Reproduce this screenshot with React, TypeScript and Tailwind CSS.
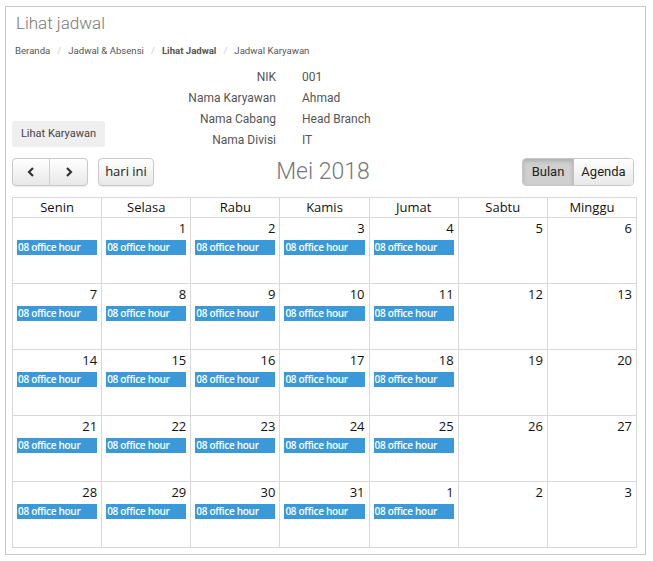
import React from "react";

const days = ["Senin", "Selasa", "Rabu", "Kamis", "Jumat", "Sabtu", "Minggu"];

type Cell = { d: number | null; ev: boolean };

const weeks: Cell[][] = [
  [
    { d: null, ev: true },
    { d: 1, ev: true },
    { d: 2, ev: true },
    { d: 3, ev: true },
    { d: 4, ev: true },
    { d: 5, ev: false },
    { d: 6, ev: false },
  ],
  [7, 8, 9, 10, 11, 12, 13].map((d, i) => ({ d, ev: i < 5 })),
  [14, 15, 16, 17, 18, 19, 20].map((d, i) => ({ d, ev: i < 5 })),
  [21, 22, 23, 24, 25, 26, 27].map((d, i) => ({ d, ev: i < 5 })),
  [28, 29, 30, 31, 1, 2, 3].map((d, i) => ({ d, ev: i < 5 })),
];

const info: [string, string][] = [
  ["NIK", "001"],
  ["Nama Karyawan", "Ahmad"],
  ["Nama Cabang", "Head Branch"],
  ["Nama Divisi", "IT"],
];

export default function App() {
  return (
    <div className="w-[653px] h-[561px] bg-white pt-[6px] pl-[5px] font-['Roboto',sans-serif]">
      <div className="w-[641px] h-[549px] border border-[#c8c8c8] px-[6px]">
        <div className="pt-[5px] pl-[4px] text-[17px] leading-[22px] text-[#777] font-light">
          Lihat jadwal
        </div>
        <div className="mt-[10px] pl-[3px] flex items-center text-[9.6px] leading-[14px] text-[#555]">
          <span>Beranda</span>
          <span className="px-[7px] text-[#ccc]">/</span>
          <span>Jadwal &amp; Absensi</span>
          <span className="px-[7px] text-[#ccc]">/</span>
          <span className="font-bold">Lihat Jadwal</span>
          <span className="px-[7px] text-[#ccc]">/</span>
          <span>Jadwal Karyawan</span>
        </div>
        <div className="mt-[9px] flex items-end">
          <div className="mb-[4px] w-[93px] h-[26px] rounded-[3px] bg-[#efefef] text-[11px] text-[#444] flex items-center justify-center">
            Lihat Karyawan
          </div>
          <div className="grid grid-cols-[171px_auto] gap-x-[26px] text-[12px] leading-[21px] text-[#555]">
            {info.map(([l, v]) => (
              <React.Fragment key={l}>
                <div className="text-right">{l}</div>
                <div>{v}</div>
              </React.Fragment>
            ))}
          </div>
        </div>
        <div className="mt-[7px] w-[622px] relative flex items-center justify-between h-[28px] font-['Open_Sans',sans-serif]">
          <div className="flex items-center gap-[10px]">
            <div className="flex h-[28px] rounded-[4px] border border-[#c8c8c8] bg-gradient-to-b from-white to-[#e8e8e8] shadow-[0_1px_1px_rgba(0,0,0,0.08)]">
              <div className="w-[37px] flex items-center justify-center border-r border-[#d0d0d0]">
                <svg width="10" height="12" viewBox="0 0 10 12">
                  <path d="M7 2 L3 6 L7 10" stroke="#333" strokeWidth="2.2" fill="none" />
                </svg>
              </div>
              <div className="w-[37px] flex items-center justify-center">
                <svg width="10" height="12" viewBox="0 0 10 12">
                  <path d="M3 2 L7 6 L3 10" stroke="#333" strokeWidth="2.2" fill="none" />
                </svg>
              </div>
            </div>
            <div className="h-[28px] w-[56px] rounded-[4px] border border-[#c8c8c8] bg-gradient-to-b from-white to-[#e8e8e8] shadow-[0_1px_1px_rgba(0,0,0,0.08)] flex items-center justify-center text-[13px] text-[#222]">
              hari ini
            </div>
          </div>
          <div className="absolute left-0 right-0 text-center pointer-events-none text-[23px] text-[#777] font-['Roboto',sans-serif] font-light">
            Mei 2018
          </div>
          <div className="flex h-[28px] rounded-[4px] border border-[#c8c8c8] overflow-hidden text-[13px] text-[#222] font-['Roboto',sans-serif]">
            <div className="w-[51px] flex items-center justify-center bg-[#d0d0d0] shadow-[inset_0_2px_4px_rgba(0,0,0,0.18)] border-r border-[#c0c0c0]">
              Bulan
            </div>
            <div className="w-[59px] flex items-center justify-center bg-gradient-to-b from-white to-[#e8e8e8]">
              Agenda
            </div>
          </div>
        </div>
        <div className="mt-[11px] w-[625px] border-l border-t border-[#d8d8d8] font-['Open_Sans',sans-serif]">
          <div className="grid grid-cols-7">
            {days.map((d) => (
              <div
                key={d}
                className="h-[20px] border-r border-b border-[#d8d8d8] text-center text-[13px] leading-[19px] text-[#111]"
              >
                {d}
              </div>
            ))}
          </div>
          {weeks.map((w, wi) => (
            <div key={wi} className="grid grid-cols-7">
              {w.map((c, ci) => (
                <div key={ci} className="h-[66px] border-r border-b border-[#d8d8d8] flex flex-col">
                  <div className="h-[22px] text-right pr-[4px] pt-[1px] text-[13px] leading-[18px] text-[#111]">
                    {c.d ?? ""}
                  </div>
                  {c.ev && (
                    <div className="ml-[4px] mr-[4px] h-[15px] bg-[#3a9ad9] text-white text-[10px] leading-[15px] font-semibold tracking-[-0.3px] pl-[1px] whitespace-nowrap overflow-hidden">
                      08 office hour
                    </div>
                  )}
                </div>
              ))}
            </div>
          ))}
        </div>
      </div>
    </div>
  );
}
